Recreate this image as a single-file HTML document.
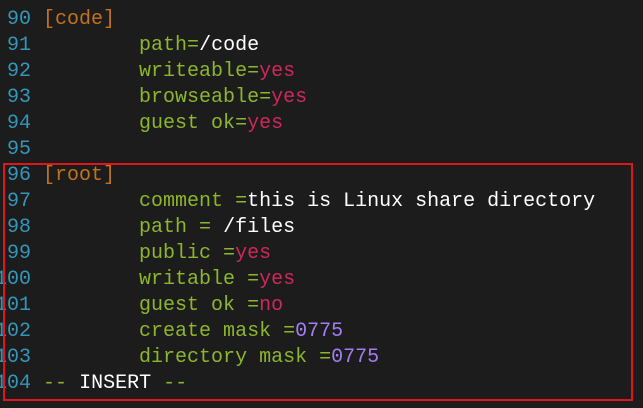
<!DOCTYPE html>
<html><head><style>
html,body{margin:0;padding:0;background:#1c1c1c;width:643px;height:408px;overflow:hidden}
pre{margin:0;position:absolute;left:-5px;top:7px;font-family:"Liberation Mono",monospace;font-size:20px;line-height:26px;color:#f2f2f2;letter-spacing:0}
.n{color:#3596b9}.o{color:#c2721a}.g{color:#8cb62c}.p{color:#d0275c}.v{color:#a57df2}.w{color:#fff}
.box{position:absolute;left:3px;top:163px;width:626px;height:234px;border:2px solid #e0161e}
</style></head><body>
<pre><span class="n"> 90</span> <span class="o">[code]</span>
<span class="n"> 91</span>         <span class="g">path=</span><span class="w">/code</span>
<span class="n"> 92</span>         <span class="g">writeable=</span><span class="p">yes</span>
<span class="n"> 93</span>         <span class="g">browseable=</span><span class="p">yes</span>
<span class="n"> 94</span>         <span class="g">guest ok=</span><span class="p">yes</span>
<span class="n"> 95</span>
<span class="n"> 96</span> <span class="o">[root]</span>
<span class="n"> 97</span>         <span class="g">comment =</span><span class="w">this is Linux share directory</span>
<span class="n"> 98</span>         <span class="g">path = </span><span class="w">/files</span>
<span class="n"> 99</span>         <span class="g">public =</span><span class="p">yes</span>
<span class="n">100</span>         <span class="g">writable =</span><span class="p">yes</span>
<span class="n">101</span>         <span class="g">guest ok =</span><span class="p">no</span>
<span class="n">102</span>         <span class="g">create mask =</span><span class="v">0775</span>
<span class="n">103</span>         <span class="g">directory mask =</span><span class="v">0775</span>
<span class="n">104</span> <span class="g">--</span> <span class="w">INSERT</span> <span class="g">--</span></pre>
<div class="box"></div>
</body></html>
